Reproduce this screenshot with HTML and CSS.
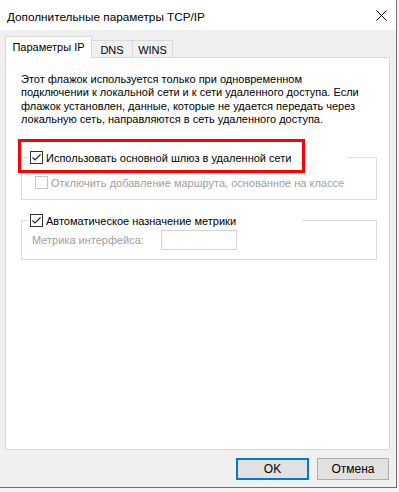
FILE: index.html
```html
<!DOCTYPE html>
<html lang="ru">
<head>
    <meta charset="utf-8" />
    <title>Дополнительные параметры TCP/IP</title>
    <link rel="stylesheet" href="styles.css">
</head>
<body>
    <div class="window">
        <div class="titlebar">
            <span class="title">Дополнительные параметры TCP/IP</span>
            <svg class="close" width="11" height="11" viewBox="0 0 11 11">
                <path d="M0.5 0.5 L10.5 10.5 M10.5 0.5 L0.5 10.5" stroke="#000" stroke-width="1" fill="none"/>
            </svg>
        </div>
        <div class="client">
            <div class="tabs">
                <div class="tab active">Параметры IP</div>
                <div class="tab">DNS</div>
                <div class="tab">WINS</div>
            </div>
            <div class="page">
                <p class="note">
                    Этот флажок используется только при одновременном<br>
                    подключении к локальной сети и к сети удаленного доступа. Если<br>
                    флажок установлен, данные, которые не удается передать через<br>
                    локальную сеть, направляются в сеть удаленного доступа.
                </p>
                <fieldset class="group gateway">
                    <legend>
                        <span class="check">
                            <span class="box"><svg width="11" height="11" viewBox="0 0 11 11"><path d="M1.5 5.5 L4 8 L9.5 2.5" stroke="#222" stroke-width="1.1" fill="none"/></svg></span>
                            Использовать основной шлюз в удаленной сети
                        </span>
                    </legend>
                    <span class="check disabled">
                        <span class="box"></span>
                        Отключить добавление маршрута, основанное на классе
                    </span>
                </fieldset>
                <fieldset class="group metric">
                    <legend>
                        <span class="check">
                            <span class="box"><svg width="11" height="11" viewBox="0 0 11 11"><path d="M1.5 5.5 L4 8 L9.5 2.5" stroke="#222" stroke-width="1.1" fill="none"/></svg></span>
                            Автоматическое назначение метрики
                        </span>
                    </legend>
                    <div class="field">
                        <span class="field-label">Метрика интерфейса:</span>
                        <span class="input"></span>
                    </div>
                </fieldset>
                <div class="highlight"></div>
            </div>
            <div class="buttons">
                <button class="btn default">OK</button>
                <button class="btn">Отмена</button>
            </div>
        </div>
    </div>
</body>
</html>
```

FILE: styles.css
```css
html{
    background: #f3f3f3;
}
body{
    margin: 0;
    font-family: "Liberation Sans", Arial, sans-serif;
    font-size: 11px;
    color: #000;
}
.window{
    width: 396px;
    height: 487px;
    border-right: 1px solid #707070;
    border-bottom: 1px solid #707070;
    display: flex;
    flex-direction: column;
    background: #f0f0f0;
}
.titlebar{
    height: 30px;
    background: #fff;
    display: flex;
    align-items: center;
    padding: 0 9px 0 7px;
    flex: none;
}
.title{
    flex: 1;
    font-size: 11.75px;
    margin-top: 2px;
}
.close{
    display: block;
    margin-top: 1px;
}
.client{
    flex: 1;
    display: flex;
    flex-direction: column;
    padding: 6px 6px 7px 5px;
    min-height: 0;
}
.tabs{
    display: flex;
    align-items: flex-end;
    height: 21px;
    flex: none;
}
.tab{
    height: 17px;
    box-sizing: border-box;
    border: 1px solid #d9d9d9;
    border-left: none;
    border-bottom: none;
    background: #f0f0f0;
    display: flex;
    align-items: center;
    justify-content: center;
    padding-top: 2px;
}
.tab:nth-child(2){
    width: 41px;
}
.tab:nth-child(3){
    width: 40px;
}
.tab.active{
    width: 87px;
    height: 22px;
    border-left: 1px solid #d9d9d9;
    background: #fff;
    margin-bottom: -1px;
    position: relative;
    z-index: 1;
    padding: 0 0 1px 0;
}
.page{
    flex: 1;
    background: #fff;
    border: 1px solid #d9d9d9;
    position: relative;
    padding: 15px 12px 0 15px;
}
.note{
    margin: 0 0 24px 0;
    line-height: 13.33px;
}
.group{
    margin: 0;
    padding: 0;
    border: 1px solid #dcdcdc;
    width: 356px;
    box-sizing: border-box;
}
.group legend{
    padding: 0;
    margin-left: 6px;
    height: 15px;
}
.gateway legend{
    width: 319px;
}
.metric legend{
    width: 274px;
}
.check{
    display: flex;
    align-items: center;
    height: 15px;
    white-space: nowrap;
}
.check .box{
    width: 13px;
    height: 13px;
    box-sizing: border-box;
    border: 1px solid #333;
    background: #fff;
    margin: 0 3px 0 2px;
    flex: none;
    display: flex;
    align-items: center;
    justify-content: center;
}
.check .box svg{
    display: block;
}
.check.disabled{
    color: #a0a0a0;
    margin: 10px 0 9px 13px;
}
.check.disabled .box{
    border-color: #c4c4c4;
    margin-left: 0;
}
.metric{
    margin-top: 13px;
}
.field{
    display: flex;
    align-items: center;
    margin: 2px 0 9px 10px;
}
.field-label{
    color: #a0a0a0;
    width: 129px;
}
.input{
    width: 76px;
    height: 20px;
    box-sizing: border-box;
    border: 1px solid #d4d4d4;
    background: #fff;
}
.highlight{
    position: absolute;
    left: 12px;
    top: 81px;
    width: 287px;
    height: 34px;
    box-sizing: border-box;
    border: 3px solid #f00;
}
.buttons{
    display: flex;
    justify-content: flex-end;
    gap: 8px;
    margin-top: 8px;
    padding-right: 1px;
    flex: none;
}
.btn{
    font-family: "Liberation Sans", Arial, sans-serif;
    font-size: 12px;
    color: #000;
    width: 72px;
    height: 22px;
    box-sizing: border-box;
    border: 1px solid #adadad;
    background: #e1e1e1;
    padding: 0;
}
.btn.default{
    width: 73px;
    border: 2px solid #0078d7;
}
```
